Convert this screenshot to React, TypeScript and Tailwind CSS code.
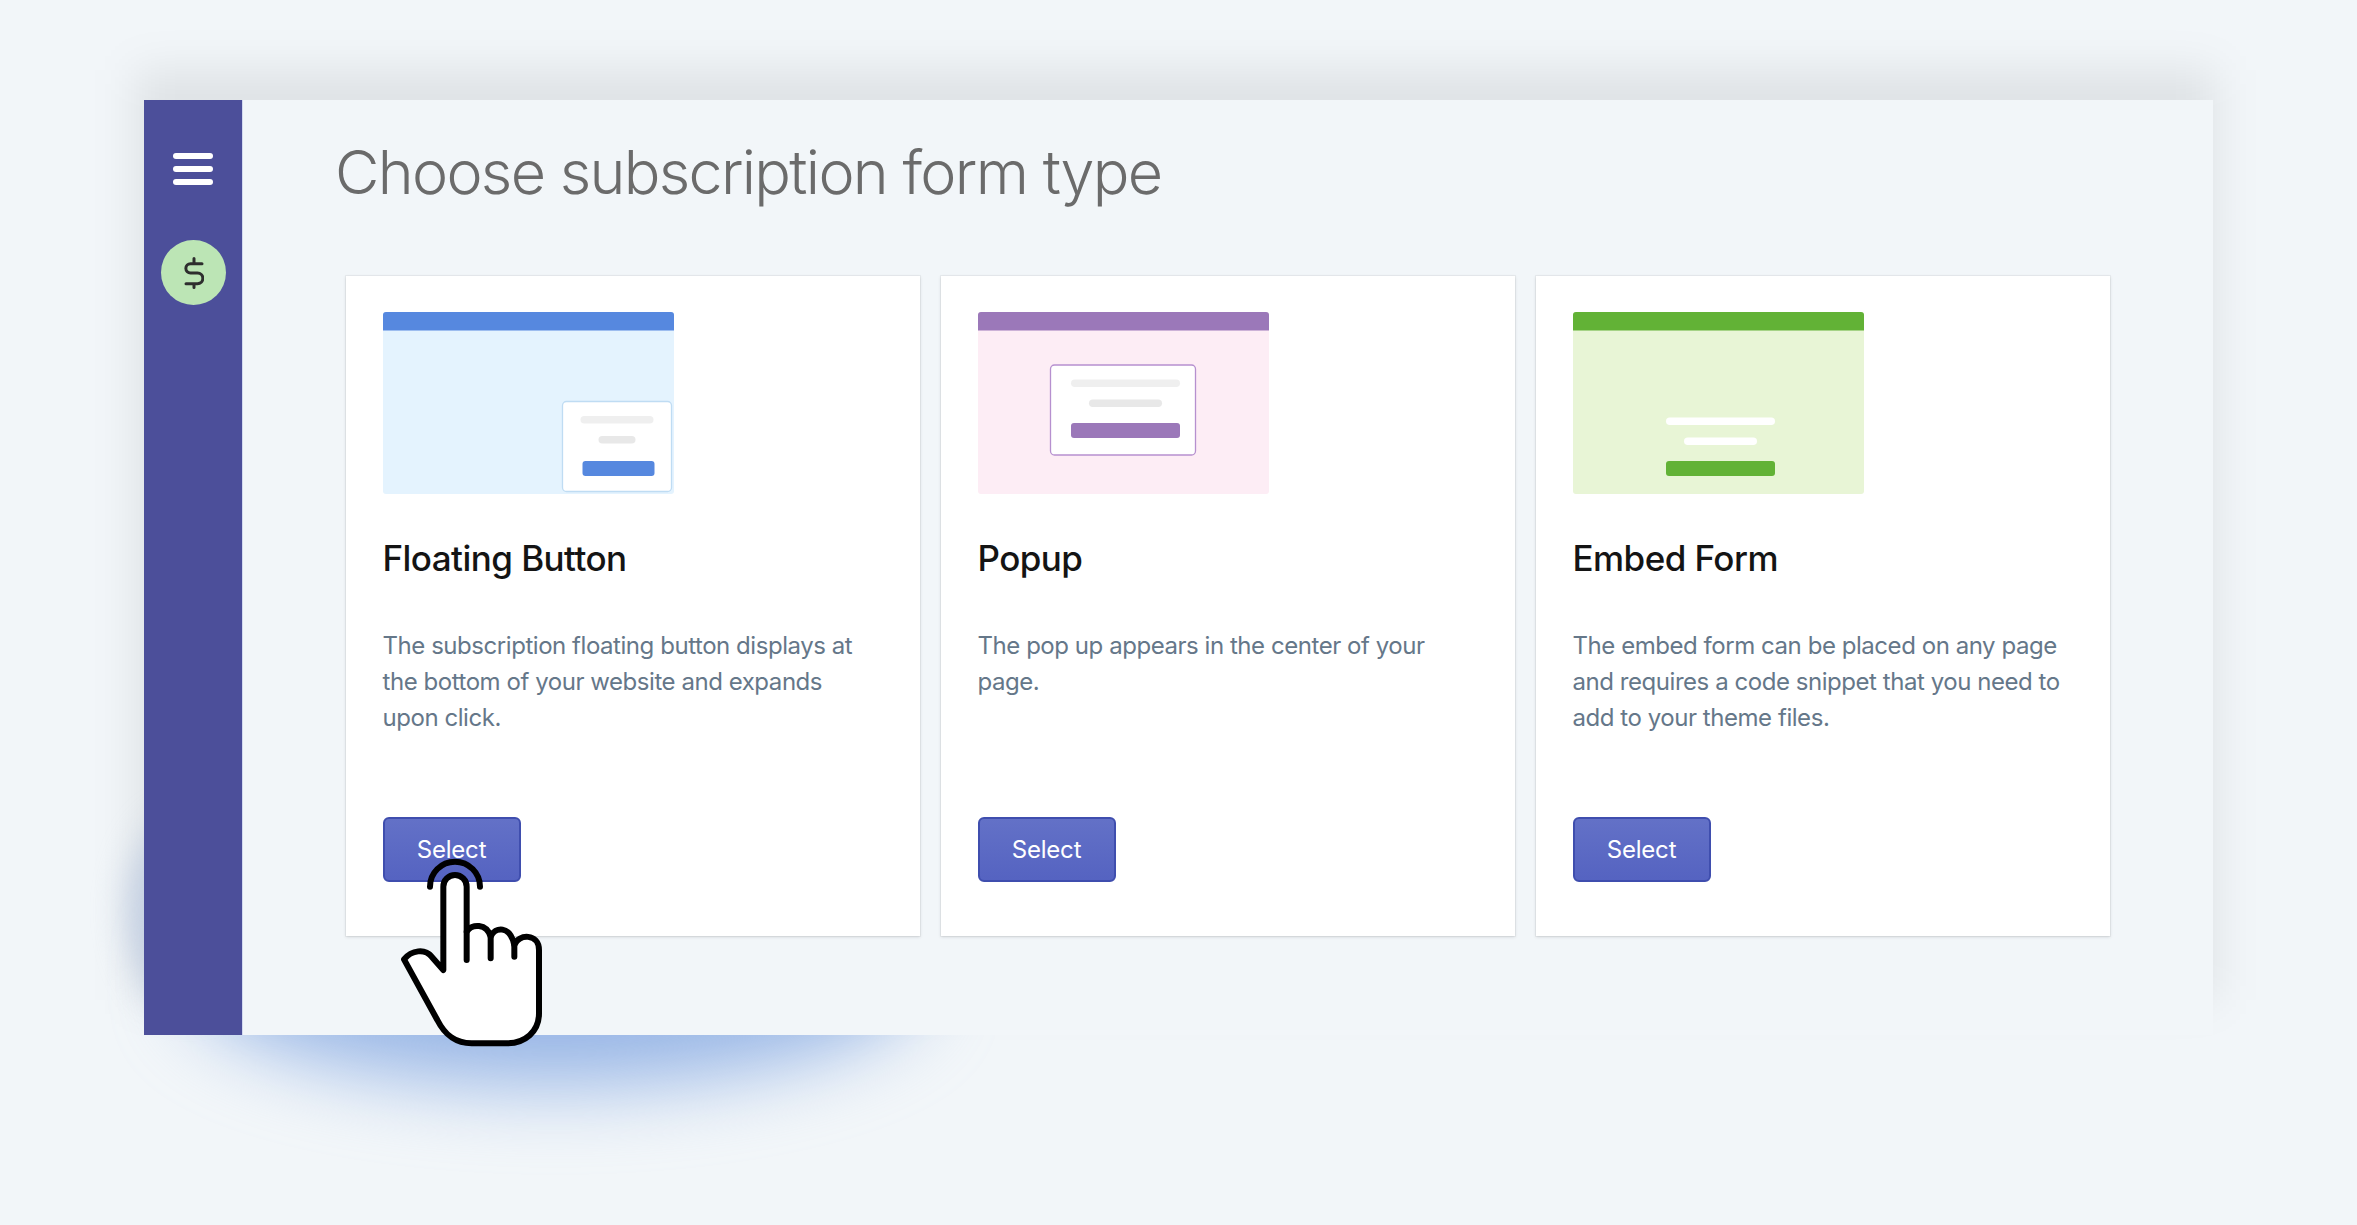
import React from 'react';

const font = { fontFamily: 'Inter, "Liberation Sans", sans-serif' };

type ThumbProps = {
    bar: string;
    bg: string;
    box?: { x: number; y: number; w: number; h: number; stroke: string };
    lineA: { x: number; y: number; w: number; fill: string };
    lineB: { x: number; y: number; w: number; fill: string };
    btn: { x: number; y: number; w: number };
};

// window thumbnail, 291x182
const Thumb: React.FC<ThumbProps> = ({ bar, bg, box, lineA, lineB, btn }) => (
    <svg width="291" height="182" viewBox="0 0 291 182" className="block">
        <path d="M0 3a3 3 0 0 1 3-3h285a3 3 0 0 1 3 3v176a3 3 0 0 1-3 3H3a3 3 0 0 1-3-3z" fill={bg} />
        <path d="M0 3a3 3 0 0 1 3-3h285a3 3 0 0 1 3 3v15.500H0z" fill={bar} />
        {box && <rect x={box.x} y={box.y} width={box.w} height={box.h} rx="4" fill="#fff" stroke={box.stroke} strokeWidth="1.300" />}
        <rect x={lineA.x} y={lineA.y} width={lineA.w} height="7.500" rx="3.750" fill={lineA.fill} />
        <rect x={lineB.x} y={lineB.y} width={lineB.w} height="7.500" rx="3.750" fill={lineB.fill} />
        <rect x={btn.x} y={btn.y} width={btn.w} height="15" rx="3" fill={bar} />
    </svg>
);

const cards: { title: string; text: string; thumb: ThumbProps }[] = [
    {
        title: 'Floating Button',
        text: 'The subscription floating button displays at the bottom of your website and expands upon click.',
        thumb: {
            bar: '#5688df',
            bg: '#e4f3fe',
            box: { x: 179.500, y: 89.500, w: 109, h: 90, stroke: '#bfdcf3' },
            lineA: { x: 197.500, y: 104, w: 73, fill: '#efefef' },
            lineB: { x: 215.500, y: 124, w: 37, fill: '#e8e8e8' },
            btn: { x: 199.500, y: 149, w: 72 },
        },
    },
    {
        title: 'Popup',
        text: 'The pop up appears in the center of your page.',
        thumb: {
            bar: '#9b78b9',
            bg: '#fdedf5',
            box: { x: 72.500, y: 53, w: 145, h: 90, stroke: '#b690cf' },
            lineA: { x: 93, y: 67.500, w: 109, fill: '#efefef' },
            lineB: { x: 111, y: 87.500, w: 73, fill: '#e8e8e8' },
            btn: { x: 93, y: 111, w: 109 },
        },
    },
    {
        title: 'Embed Form',
        text: 'The embed form can be placed on any page and requires a code snippet that you need to add to your theme files.',
        thumb: {
            bar: '#62b236',
            bg: '#e8f5d6',
            lineA: { x: 93, y: 105.500, w: 109, fill: '#ffffff' },
            lineB: { x: 111, y: 125.500, w: 73, fill: '#ffffff' },
            btn: { x: 93, y: 149, w: 109 },
        },
    },
];

export default function App() {
    return (
        <div className="relative h-[1225px] w-[2357px] overflow-hidden bg-[#f2f6f9] pl-[144px] pt-[100px]" style={font}>
            {/* soft shadows behind the window */}
            <div className="absolute left-[135px] top-[70px] h-[930px] w-[2081px] bg-black/8 blur-[22px]" />
            <div className="absolute left-[190px] top-[870px] h-[215px] w-[730px] rounded-[50%] bg-[#98b6e6] blur-[38px]" />
            <div className="absolute left-[128px] top-[815px] h-[190px] w-[120px] rounded-[50%] bg-[#c3cfe2] blur-[16px]" />

            <div className="relative flex h-[935px] w-[2069px] bg-[#f2f6f9]">
                {/* Sidebar */}
                <aside className="flex w-[99px] shrink-0 flex-col items-center border-r border-[#d3daf0] bg-[#4c4f9a] pt-[53px]">
                    <div className="flex w-[40px] flex-col gap-[7px]">
                        <span className="h-[6px] rounded-full bg-white" />
                        <span className="h-[6px] rounded-full bg-white" />
                        <span className="h-[6px] rounded-full bg-white" />
                    </div>
                    <div className="ml-[1px] mt-[55px] flex h-[65px] w-[65px] items-center justify-center rounded-full bg-[#bce5b5]">
                        <svg width="20" height="32" viewBox="0 0 20 32" fill="none" stroke="#2e2e2e" strokeWidth="3" strokeLinecap="round">
                            <path d="M10 1.500V6.700M10 26.700V30.500M18 6.700H6.500a4.650 4.650 0 0 0 0 9.300H13.500a5.350 5.350 0 0 1 0 10.700H2" />
                        </svg>
                    </div>
                </aside>

                {/* Main */}
                <main className="flex-1 pl-[103px] pt-[36px]">
                    <h1 className="ml-[-11px] text-[61px] font-light leading-[72px] tracking-[-1.7px] text-[#6b6b6b]">Choose subscription form type</h1>
                    <div className="mt-[68px] flex gap-[21px]">
                        {cards.map((card) => (
                            <section key={card.title} className="flex h-[660px] w-[574px] flex-col bg-white pl-[36.5px] pr-[40px] pt-[36px] shadow-[0_0_0_1px_rgba(63,63,68,0.05),0_1px_3px_rgba(63,63,68,0.18)]">
                                <Thumb {...card.thumb} />
                                <h2 className="mt-[41px] text-[35px] font-medium leading-[46px] tracking-[-0.55px] text-[#141414]">{card.title}</h2>
                                <p className="mt-[47px] h-[108px] text-[24px] font-normal leading-[36px] tracking-[-0.45px] text-[#657789]">{card.text}</p>
                                <button className="mt-[81px] h-[65px] w-[138px] rounded-[6px] border-2 border-[#3f4eae] bg-gradient-to-b from-[#6371c7] to-[#5563c1] text-[24px] tracking-[-0.2px] text-white">
                                    Select
                                </button>
                            </section>
                        ))}
                    </div>
                </main>
            </div>

            {/* pointer hand */}
            <svg className="absolute left-[340px] top-[790px]" width="240" height="270" viewBox="0 0 720 810" fill="none" stroke="#000" strokeWidth="18" strokeLinecap="round" strokeLinejoin="round">
                <path
                    d="M310 540V290a35 35 0 0 1 70 0V425C395 400 440 400 452 440C465 410 510 405 523 465C535 430 597 430 597 480V670C597 725 555 760 500 760H395C345 760 315 735 292 690L192 508C215 480 255 475 275 500Z"
                    fill="#fff"
                />
                <path d="M380 425V510M452 440V505M523 465V500" />
                <path d="M270 290a75 75 0 0 1 150 0" />
            </svg>
        </div>
    );
}
